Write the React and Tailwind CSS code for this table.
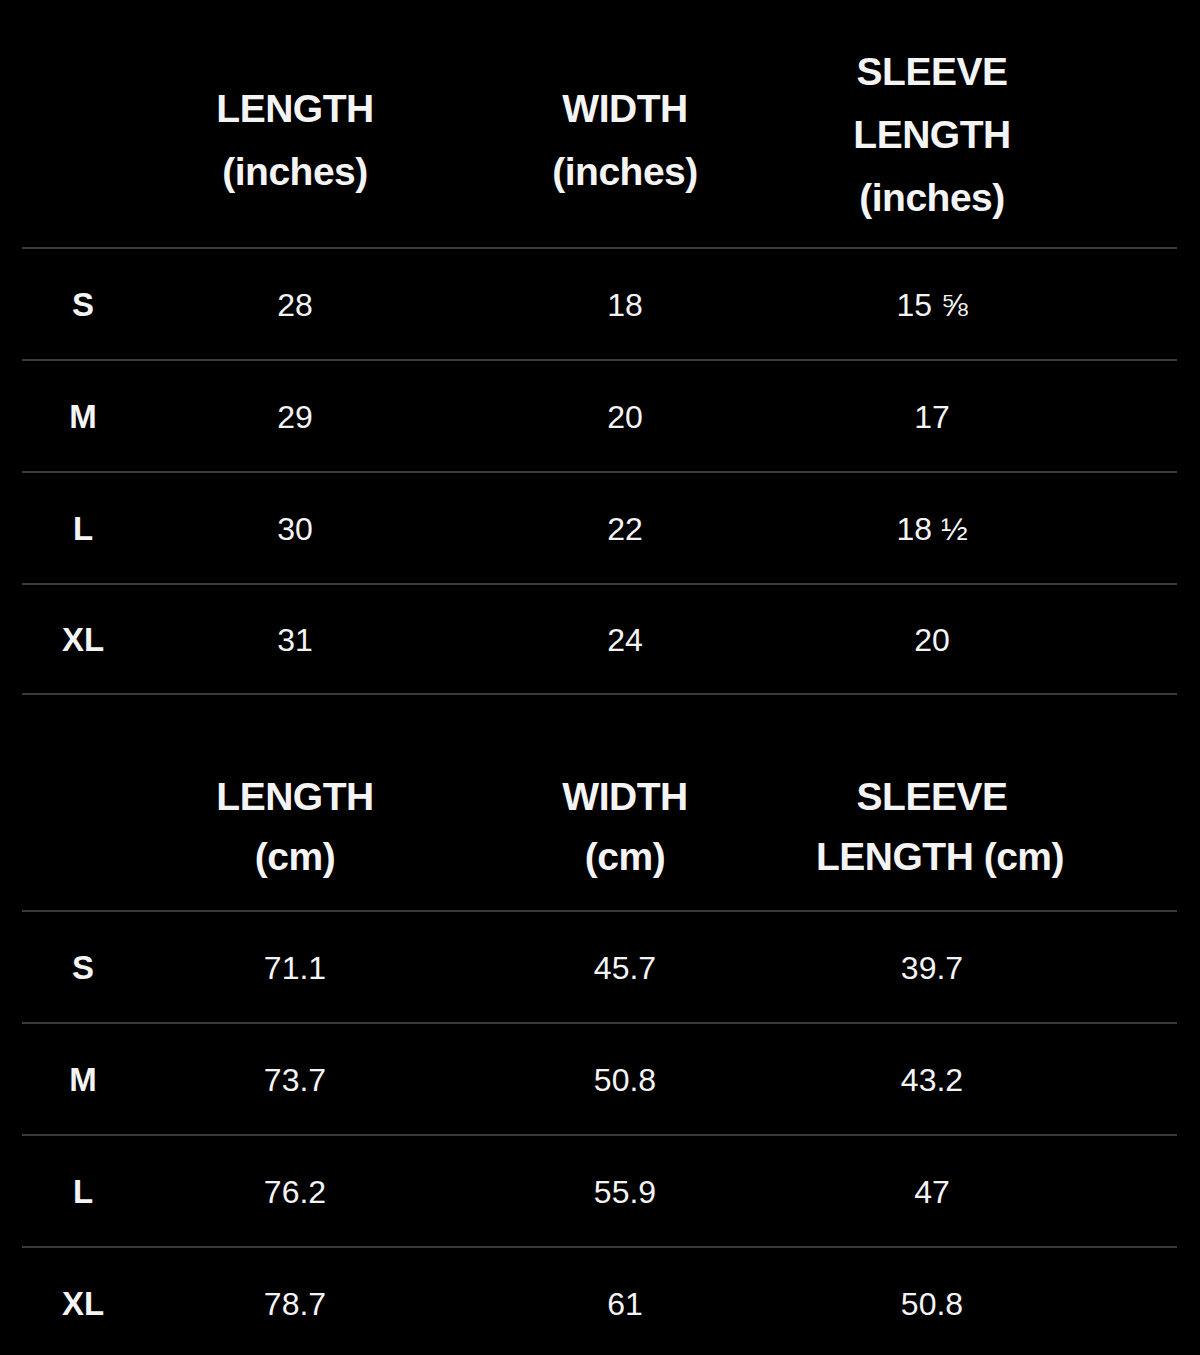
const inches = {
  head: [
    ["LENGTH", "(inches)"],
    ["WIDTH", "(inches)"],
    ["SLEEVE", "LENGTH", "(inches)"],
  ],
  rows: [
    ["S", "28", "18", "15 ⅝"],
    ["M", "29", "20", "17"],
    ["L", "30", "22", "18 ½"],
    ["XL", "31", "24", "20"],
  ],
};

const cm = {
  head: [
    ["LENGTH", "(cm)"],
    ["WIDTH", "(cm)"],
    ["SLEEVE", "LENGTH (cm)"],
  ],
  rows: [
    ["S", "71.1", "45.7", "39.7"],
    ["M", "73.7", "50.8", "43.2"],
    ["L", "76.2", "55.9", "47"],
    ["XL", "78.7", "61", "50.8"],
  ],
};

const cols = "grid grid-cols-[122px_302px_358px_256px_1fr]";

function SizeTable({ data, headHeight, lead, last, shortPad }) {
  return (
    <div>
      <div className={`${cols} ${headHeight}`}>
        <div />
        {data.head.map((lines, i) => (
          <div
            key={i}
            className={`flex flex-col items-center justify-center whitespace-nowrap text-center text-[39px] font-bold tracking-[-0.5px] ${lead} ${lines.length === 2 ? shortPad : ""}`}
          >
            {lines.map((l) => (
              <span key={l} className={l === "LENGTH (cm)" ? "translate-x-2" : ""}>
                {l}
              </span>
            ))}
          </div>
        ))}
        <div />
      </div>
      {data.rows.map((r, i) => (
        <div
          key={r[0]}
          className={`${cols} h-[112px] border-t-2 border-[#3a3a3a] ${last && i === data.rows.length - 1 ? "border-b-2" : ""}`}
        >
          <div className="flex items-center justify-center pt-0.5 text-[33px] font-bold">{r[0]}</div>
          {r.slice(1).map((v, j) => (
            <div key={j} className="flex items-center justify-center pt-0.5 text-[32px]">
              {v}
            </div>
          ))}
          <div />
        </div>
      ))}
    </div>
  );
}

export default function App() {
  return (
    <div className="min-h-[1355px] bg-black pl-[22px] pr-[23px] pt-[21px] text-[#f4f4f4] font-['Liberation_Sans',Arial,sans-serif]">
      <SizeTable data={inches} headHeight="h-[226px]" lead="leading-[63px]" shortPad="pt-3" last />
      <div className="mt-[48px]">
        <SizeTable data={cm} headHeight="h-[167px]" lead="leading-[60px]" shortPad="" />
      </div>
    </div>
  );
}
